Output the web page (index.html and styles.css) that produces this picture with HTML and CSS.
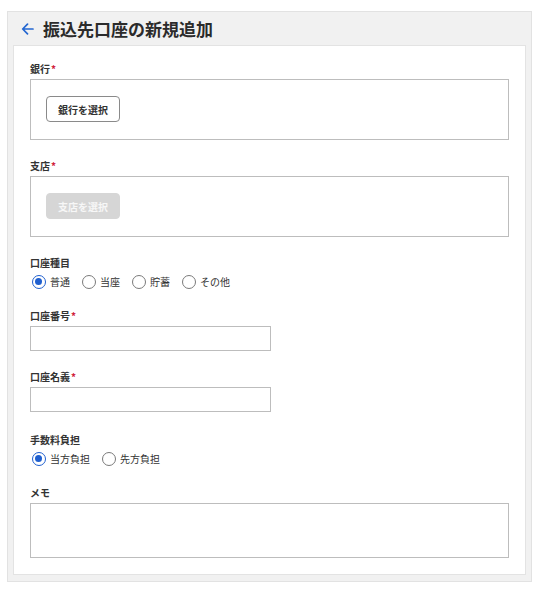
FILE: index.html
```html
<!DOCTYPE html>
<html lang="ja">
<head>
<meta charset="utf-8">
<link rel="stylesheet" href="styles.css">
</head>
<body>
<div class="panel">
  <div class="header">
    <svg class="back" width="13" height="12" viewBox="0 0 13 12"><path d="M12 6H2M6.5 1.2L1.7 6l4.8 4.8" fill="none" stroke="#2467d1" stroke-width="1.7" stroke-linecap="round" stroke-linejoin="round"/></svg>
    <h1 class="title">振込先口座の新規追加</h1>
  </div>
  <div class="card">
    <div class="field first">
      <div class="label">銀行<span class="req">*</span></div>
      <div class="select-box"><button class="btn">銀行を選択</button></div>
    </div>
    <div class="field">
      <div class="label">支店<span class="req">*</span></div>
      <div class="select-box"><button class="btn disabled">支店を選択</button></div>
    </div>
    <div class="field">
      <div class="label">口座種目</div>
      <div class="radios">
        <label class="radio"><span class="dot checked"></span>普通</label>
        <label class="radio"><span class="dot"></span>当座</label>
        <label class="radio"><span class="dot"></span>貯蓄</label>
        <label class="radio"><span class="dot"></span>その他</label>
      </div>
    </div>
    <div class="field">
      <div class="label">口座番号<span class="req">*</span></div>
      <div class="input"></div>
    </div>
    <div class="field">
      <div class="label">口座名義<span class="req">*</span></div>
      <div class="input"></div>
    </div>
    <div class="field fee">
      <div class="label">手数料負担</div>
      <div class="radios">
        <label class="radio"><span class="dot checked"></span>当方負担</label>
        <label class="radio"><span class="dot"></span>先方負担</label>
      </div>
    </div>
    <div class="field">
      <div class="label">メモ</div>
      <div class="textarea"></div>
    </div>
  </div>
</div>
</body>
</html>
```

FILE: styles.css
```css
* { box-sizing: border-box; }
body {
  margin: 0;
  background: #fff;
  font-family: "Noto Sans CJK JP", "Noto Sans", sans-serif;
  color: #333;
}
.panel {
  margin: 11px 0 0 7px;
  width: 525px;
  background: #f1f1f1;
  border: 1px solid #e2e2e2;
  padding: 0 5px 6px 5px;
}
.header {
  height: 33px;
  display: flex;
  align-items: center;
  padding-left: 8px;
}
.back { display: block; margin-right: 9px; }
.title {
  margin: 0;
  font-size: 17px;
  font-weight: 700;
  line-height: 20px;
  color: #2b2b2b;
}
.card {
  background: #fff;
  border: 1px solid #e3e3e3;
  padding: 16px 16px 16px 16px;
}
.field { margin-top: 19px; }
.field.first { margin-top: 0; }
.field.fee { margin-top: 21px; }
.label {
  font-size: 10px;
  font-weight: 700;
  line-height: 14px;
  margin-bottom: 3px;
  color: #333;
}
.req { color: #d0213c; margin-left: 1px; }
.select-box {
  height: 61px;
  border: 1px solid #bdbdbd;
  padding: 16px 15px;
}
.btn {
  display: block;
  width: 74px;
  height: 26px;
  border: 1px solid #8a8a8a;
  border-radius: 4px;
  background: #fff;
  font-family: inherit;
  font-size: 10px;
  font-weight: 700;
  color: #333;
  padding: 0;
}
.btn.disabled {
  background: #d6d6d6;
  border-color: #d6d6d6;
  color: #f7f7f7;
}
.radios {
  display: flex;
  align-items: center;
  height: 17px;
}
.radio {
  display: flex;
  align-items: center;
  font-size: 10px;
  line-height: 14px;
  color: #333;
  margin-right: 10px;
  margin-left: 2px;
}
.dot {
  width: 14px;
  height: 14px;
  border: 1.5px solid #7a7a7a;
  border-radius: 50%;
  margin-right: 4px;
  position: relative;
  flex: none;
}
.dot.checked { border-color: #1f5fcf; }
.dot.checked::after {
  content: "";
  position: absolute;
  left: 2px; top: 2px;
  width: 7px; height: 7px;
  border-radius: 50%;
  background: #1f5fcf;
}
.input {
  width: 241px;
  height: 25px;
  border: 1px solid #bdbdbd;
}
.textarea {
  height: 55px;
  border: 1px solid #bdbdbd;
}
```
